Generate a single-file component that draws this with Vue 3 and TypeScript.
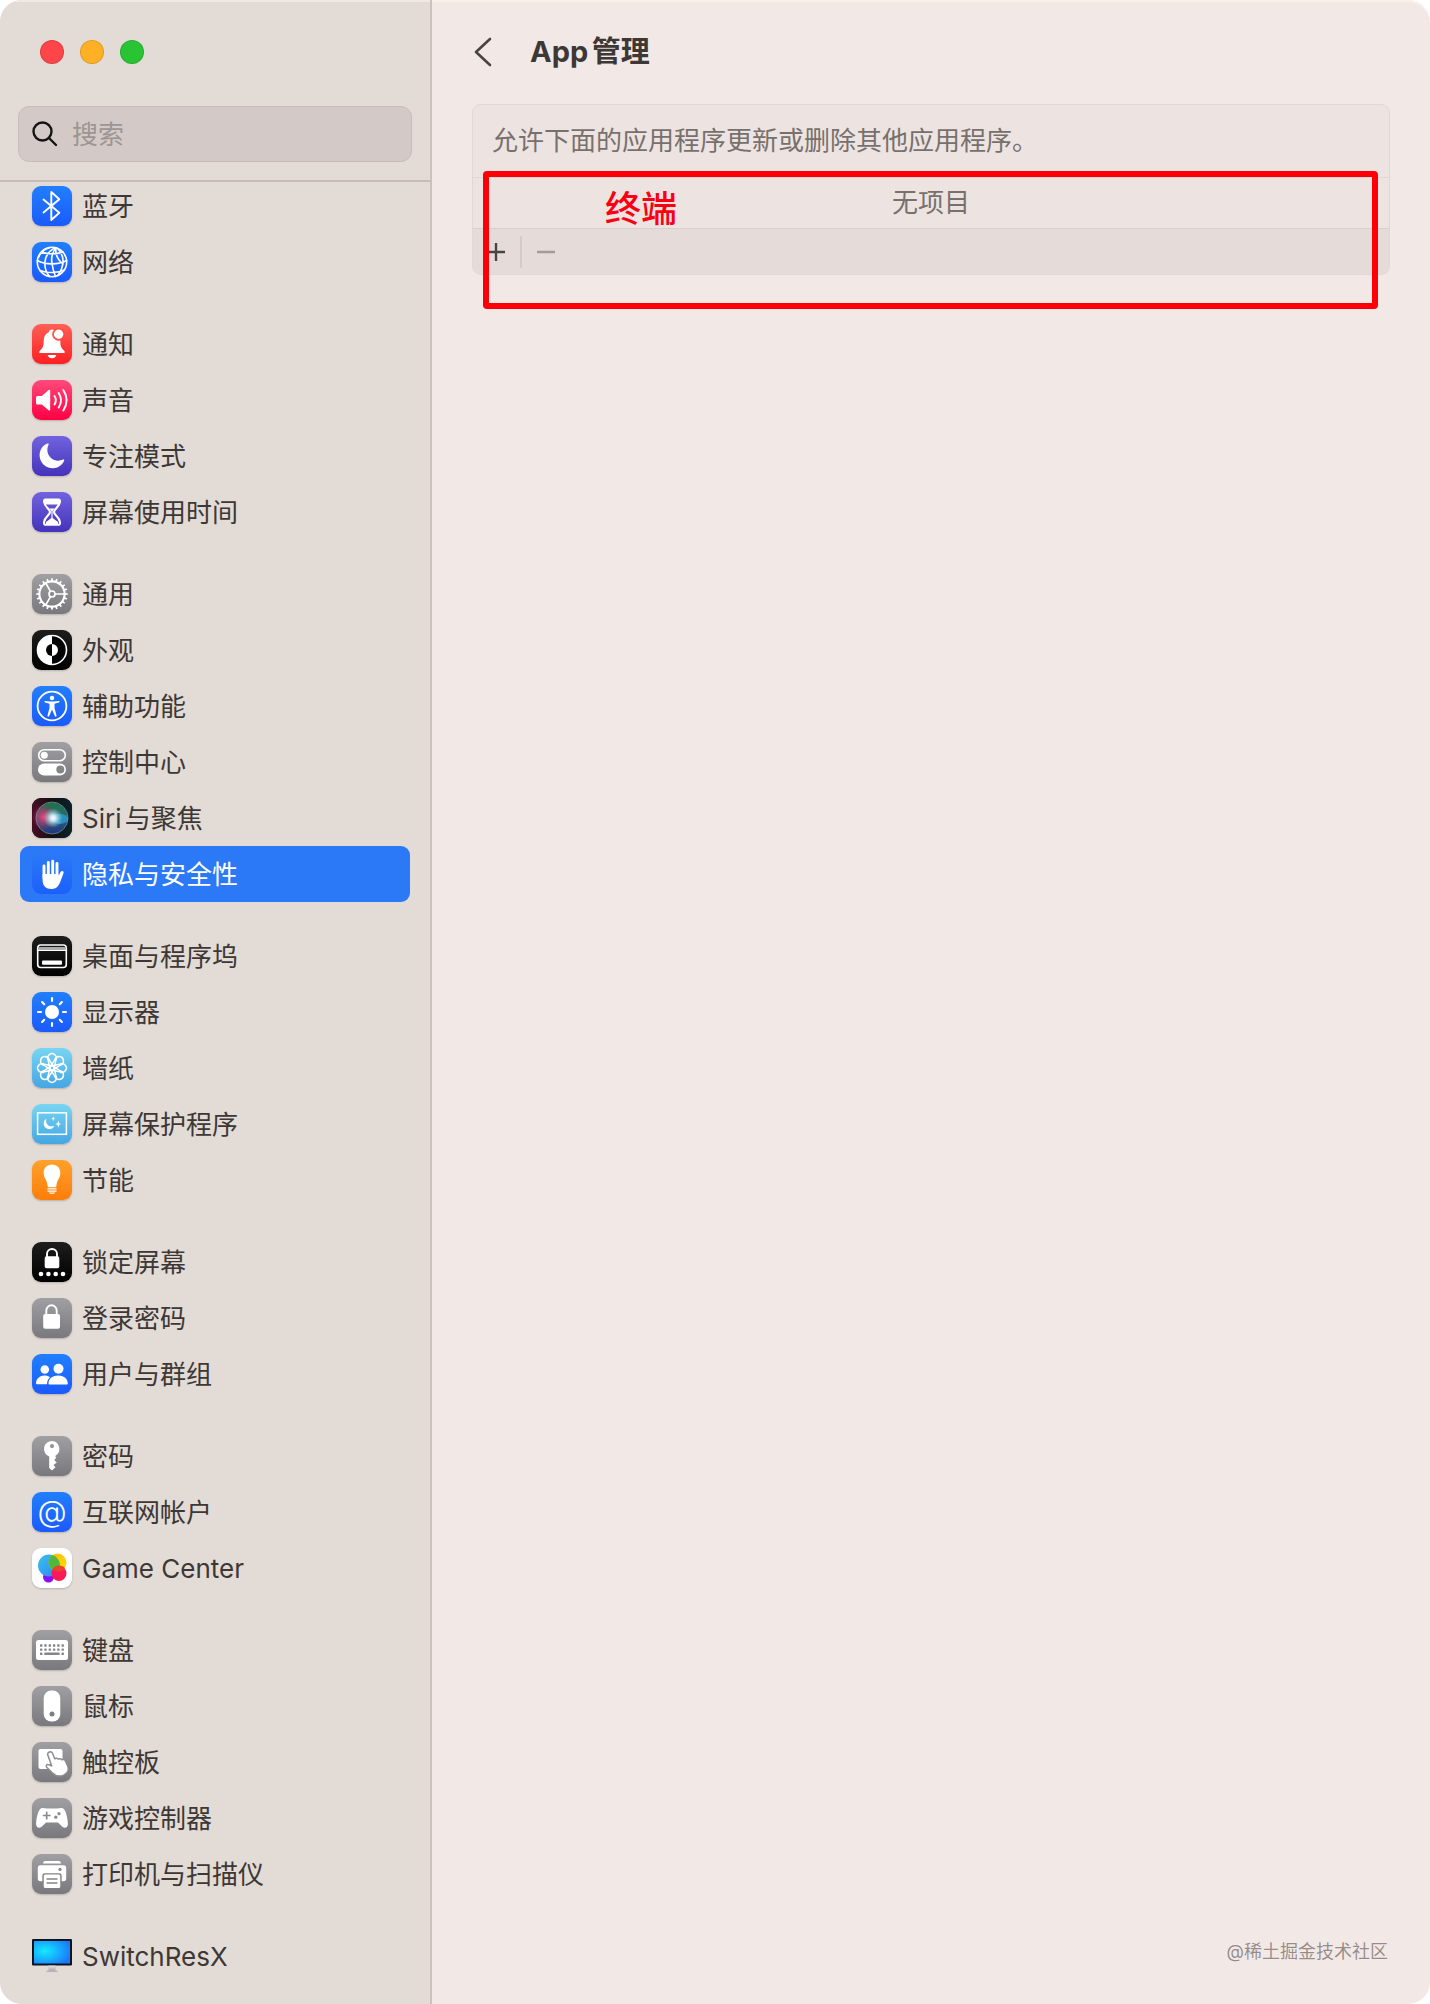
<script setup lang="ts">
import { ref } from 'vue'

interface Item {
  label: string
  icon: string
  tone: string
}

const query = ref('')
const selected = ref('隐私与安全性')

const groups: Item[][] = [
  [
    { label: '蓝牙', icon: 'bluetooth', tone: 'blue' },
    { label: '网络', icon: 'globe', tone: 'blue' },
  ],
  [
    { label: '通知', icon: 'bell', tone: 'red' },
    { label: '声音', icon: 'speaker', tone: 'pink' },
    { label: '专注模式', icon: 'moon', tone: 'indigo' },
    { label: '屏幕使用时间', icon: 'hourglass', tone: 'indigo' },
  ],
  [
    { label: '通用', icon: 'gear', tone: 'gray' },
    { label: '外观', icon: 'appearance', tone: 'black' },
    { label: '辅助功能', icon: 'person', tone: 'blue' },
    { label: '控制中心', icon: 'toggles', tone: 'gray' },
    { label: 'Siri与聚焦', icon: 'siri', tone: 'black' },
    { label: '隐私与安全性', icon: 'hand', tone: 'blue' },
  ],
  [
    { label: '桌面与程序坞', icon: 'dock', tone: 'black' },
    { label: '显示器', icon: 'sun', tone: 'blue' },
    { label: '墙纸', icon: 'flower', tone: 'cyan' },
    { label: '屏幕保护程序', icon: 'saver', tone: 'cyan' },
    { label: '节能', icon: 'bulb', tone: 'orange' },
  ],
  [
    { label: '锁定屏幕', icon: 'lockDots', tone: 'black' },
    { label: '登录密码', icon: 'lock', tone: 'gray' },
    { label: '用户与群组', icon: 'users', tone: 'blue' },
  ],
  [
    { label: '密码', icon: 'key', tone: 'gray' },
    { label: '互联网帐户', icon: 'at', tone: 'blue' },
    { label: 'Game Center', icon: 'game', tone: 'white' },
  ],
  [
    { label: '键盘', icon: 'keyboard', tone: 'gray' },
    { label: '鼠标', icon: 'mouse', tone: 'gray' },
    { label: '触控板', icon: 'trackpad', tone: 'gray' },
    { label: '游戏控制器', icon: 'gamepad', tone: 'gray' },
    { label: '打印机与扫描仪', icon: 'printer', tone: 'gray' },
  ],
  [{ label: 'SwitchResX', icon: 'monitor', tone: 'clear' }],
]

const line = (w: number, body: string) =>
  `<g fill="none" stroke="#fff" stroke-width="${w}" stroke-linecap="round" stroke-linejoin="round">${body}</g>`
const spin = (n: number, body: string) =>
  Array.from({ length: n }, (_, i) => `<g transform="rotate(${(360 / n) * i} 20 20)">${body}</g>`).join('')

const keys = [0, 1, 2]
  .map((r) =>
    [0, 1, 2, 3, 4, 5]
      .filter((c) => r < 2 || c === 0 || c === 5)
      .map((c) => `<rect x="${8 + c * 4.3}" y="${14.3 + r * 4.1}" width="2.4" height="2.4" rx=".5"/>`)
      .join(''),
  )
  .join('')

// Glyphs are drawn on a 40 x 40 tile.
const icons: Record<string, string> = {
  bluetooth: line(1.9, '<path d="M11.500 13.500 27.300 26.800 19.300 34V6l8 7.200L11.500 26.500"/>'),
  globe: line(
    1.6,
    '<circle cx="20" cy="20" r="14.700"/><path d="M23 5.600C17 9 13 15 12.800 21c0 5 1.700 10 4.700 13.400M24 5.800c-4 5-5 10-4 15.500 .6 5 2 9.500 3.500 13.200M18 5.500C12 7 8 11.500 6.500 15.500M25 6c4 4 6.500 8.500 6 14-.3 4.500-2 9-5 13.200M24 6c-1 6 1 11 7 16M9.500 10c6 2.500 15 2.500 21.500 0M5.300 18.500c8 4.500 21 4.500 29.400 0M8 28.500c7 2.700 17.500 2.700 24.500-.5"/>',
  ),
  bell: '<path fill="#fff" d="M20 5.500c-2 0-3 1-3 2.600-3.600 1.400-5.300 4.800-5.300 9 0 5.500-1 7-4 9.900-1 1-.6 2 .6 2h23.400c1.200 0 1.600-1 .6-2-3-2.900-4-4.400-4-9.900 0-4.200-1.700-7.600-5.300-9 0-1.600-1-2.600-3-2.600zM15.700 31h8.600c-.5 2-2 3.300-4.300 3.300s-3.800-1.300-4.300-3.300z"/><circle cx="26.600" cy="10.300" r="6.400" fill="#fd4b43"/><circle cx="26.600" cy="10.300" r="4.700" fill="#fff"/>',
  speaker:
    '<path fill="#fff" d="M4 17.500Q4 16 5.500 16H9.800L16.600 10q1.600-1 1.600.8v18.700q0 1.800-1.600.8L9.800 24.500H5.500Q4 24.500 4 23z"/>' +
    line(1.9, '<path d="M22.500 16q2.700 4.200 0 8.500M26.700 13q4.700 7.200 0 14.500M31.300 10q6.700 10.200 0 20.500"/>'),
  moon: '<path fill="#fff" d="M15.500 7.500C9 10 6.500 16.500 8 22.500c1.700 6 7 10 13 9.800 5-.2 9.200-3 11.200-7.800.3-.9-.4-1.300-1.200-.9-4 1.900-9 1.400-12.500-2.100-3.500-3.500-4-8.500-1.900-12.900.3-.8-.2-1.400-1.100-1.100z"/>',
  hourglass:
    line(
      2.1,
      '<path d="M13.300 7.500h13.400q1.500 0 1.200 2.500c-.5 5-5.900 7-5.900 10s5.400 5 5.900 10q.3 2.800-1.200 2.800H13.300q-1.500 0-1.200-2.800c.5-5 5.900-7 5.900-10s-5.400-5-5.900-10q-.3-2.500 1.200-2.500z"/>',
    ) +
    '<path fill="#fff" d="M12 7h16l-1 5.500H13zM17.500 16.500h5L20.600 19v7l5.400 4v2.500H14V30l5.400-4v-7z"/>',
  gear:
    line(2.1, '<circle cx="20" cy="20" r="12.600"/>') +
    line(1.7, '<circle cx="20" cy="20" r="3"/><path d="M23 20h9.500M18.500 17.400 13.800 9.200M18.500 22.600l-4.700 8.200"/>') +
    spin(20, '<path fill="#fff" d="M18.900 7.500 19.300 4.200h1.400l.4 3.300z"/>'),
  appearance:
    '<circle cx="20" cy="20" r="14.500" fill="#050505" stroke="#fff" stroke-width="1.600"/><path fill="#fff" d="M20 5.500a14.500 14.500 0 0 0 0 29zM20 14a6 6 0 0 1 0 12z"/><path fill="#050505" d="M20 14a6 6 0 0 0 0 12z"/>',
  person:
    line(1.8, '<circle cx="20" cy="20" r="14.400"/>') +
    '<circle cx="20" cy="12" r="2.200" fill="#fff"/><path fill="#fff" d="M13.600 14.900 18 15.600h4l4.400-.7c1.400-.1 1.600 1.400.3 1.700L22.500 17.800V22l2 7.500c.3 1.300-1.200 1.600-1.700.4L20 23.500l-2.800 6.400c-.5 1.200-2 .9-1.700-.4l2-7.500v-4.200l-4.200-1.200c-1.300-.3-1.100-1.800.3-1.700z"/>',
  toggles:
    '<rect x="6.700" y="7.700" width="26.600" height="11" rx="5.500" fill="none" stroke="#fff" stroke-width="1.600"/><circle cx="12.300" cy="13.200" r="3.500" fill="#fff"/><rect x="6" y="21.500" width="28" height="12" rx="6" fill="#fff"/><circle cx="28.300" cy="27.500" r="4" fill="#858487"/>',
  siri:
    '<defs><linearGradient id="s0"><stop offset="0" stop-color="#4a0c25"/><stop offset=".5" stop-color="#111"/><stop offset="1" stop-color="#08232e"/></linearGradient><radialGradient id="s1"><stop offset="0" stop-color="#fff"/><stop offset=".3" stop-color="#d8f2ff" stop-opacity=".9"/><stop offset="1" stop-color="#7cc" stop-opacity="0"/></radialGradient><linearGradient id="s2" y2="1" x2="0"><stop offset="0" stop-color="#23935a"/><stop offset=".45" stop-color="#338288"/><stop offset="1" stop-color="#2640a8"/></linearGradient><radialGradient id="s3"><stop offset="0" stop-color="#f3417e"/><stop offset="1" stop-color="#c91d5c" stop-opacity="0"/></radialGradient></defs>' +
    '<rect width="40" height="40" rx="9" fill="url(#s0)"/><circle cx="20" cy="20" r="15.500" fill="url(#s2)" opacity=".75"/><ellipse cx="11.500" cy="19" rx="12" ry="13" fill="url(#s3)"/><ellipse cx="28" cy="21" rx="8" ry="5" fill="#2ba7e8" opacity=".65"/><circle cx="21" cy="20" r="10" fill="url(#s1)"/><circle cx="20" cy="20" r="16" fill="none" stroke="#8ab" stroke-width=".9" opacity=".75"/>',
  hand:
    line(2.9, '<path d="M12 12v12M16.300 8.500V22M20.700 7.300V22M25 9.500V24"/>') +
    '<path fill="#fff" d="M10.600 20h15.900v2l2-4c1-1.800 3.800-1.200 3 1.200L28 28.500c-1.800 4.500-4.500 6.500-8.800 6.500-5.200 0-8.600-3-8.600-9z"/>',
  dock:
    line(1.6, '<rect x="5.700" y="9" width="28.600" height="22.500" rx="3"/>') +
    '<path fill="#aaa" d="M6 11h28v2.500H6z"/><path fill="#fff" d="M6 13.500h28V15H6z"/><rect x="10" y="24.500" width="20" height="4.300" rx="1" fill="#fff"/>',
  sun: '<circle cx="20" cy="20" r="7" fill="#fff"/>' + spin(8, line(2.1, '<path d="M20 6v3"/>')),
  flower: spin(8, line(1.5, '<path d="M18.200 22 16.200 12.300A4.400 4.400 0 1 1 23.800 12.300L21.800 22"/>')),
  saver:
    '<rect x="5.600" y="8.800" width="28.800" height="21.500" fill="none" stroke="#fff" stroke-width="1.500"/><path fill="#fff" d="M14.500 14.500c-3.500 2-3.600 7-.8 9.300 3.300 2.600 7.600 1.200 8.500-2-3 1.200-5.700.4-7.200-1.800-1.200-1.800-1.200-3.800-.5-5.500zM26.300 16.500l.9 2.700 2 .8-2 .8-.9 2.900-.9-2.900-2-.8 2-.8zM21.300 12.300l.6 1.800 1.400.6-1.400.6-.6 1.800-.6-1.800-1.400-.6 1.400-.6z"/>',
  bulb: '<path fill="#fff" d="M20 4.500c-5 0-8.300 3.600-8.300 8.200 0 5.500 3.500 7 3.900 13 .1 1.300.5 1.500 1.500 1.500h5.800c1 0 1.400-.2 1.500-1.500.4-6 3.900-7.500 3.900-13 0-4.600-3.300-8.200-8.300-8.200z"/><path fill="#fff" d="M15.500 28.300h9v1.300h-9zM15.500 30.500h9v1.200h-9zM16.800 32.500h6.400l-1.200 1.300h-4z"/>',
  lockDots:
    line(1.9, '<path d="M15 16v-4a5 5 0 0 1 10 0v4"/>') +
    '<rect x="12.700" y="14.300" width="14.600" height="12" rx="1.800" fill="#fff"/><g fill="#fff"><circle cx="9" cy="32" r="2.300"/><circle cx="16.400" cy="32" r="2.300"/><circle cx="23.700" cy="32" r="2.300"/><circle cx="31" cy="32" r="2.300"/></g>',
  lock:
    line(1.9, '<path d="M14.300 17v-4.500a5.200 5.200 0 0 1 10.400 0V17"/>') +
    '<rect x="11.200" y="16" width="16.800" height="14.700" rx="2" fill="#fff"/>',
  users:
    '<g fill="#fff"><circle cx="12.800" cy="15.500" r="4.300"/><circle cx="26.500" cy="14.800" r="5"/><path d="M4 29.500c0-5 4-8 8.500-8 2 0 4 .6 5.500 1.700-2 1.700-3 4-3 7H5q-1 0-1-.700zM16.500 29.500c0-5.200 4.500-8 9.700-8s9.600 2.800 9.600 8q0 1-1 1H17.500q-1 0-1-1z"/></g>',
  key: '<path fill="#fff" fill-rule="evenodd" d="M20 5a8 8 0 0 0-2.800 15.500V32l2.800 2.600 3.500-3.300-2-2.300 3.300-2.500-2.600-2.500 2-2.300-1-1.700A8 8 0 0 0 20 5zm0 3a2.100 2.100 0 1 1 0 4.200A2.100 2.100 0 0 1 20 8z"/>',
  at: '<text x="20" y="30" text-anchor="middle" font-family="Inter, sans-serif" font-size="30" font-weight="300" fill="#fff">@</text>',
  game:
    '<defs><linearGradient id="g1" y2="1"><stop offset="0" stop-color="#3ac4e8"/><stop offset="1" stop-color="#2f83f5"/></linearGradient><linearGradient id="g2" y2="1"><stop offset="0" stop-color="#fdb913"/><stop offset="1" stop-color="#ffe000"/></linearGradient><clipPath id="g3"><circle cx="17" cy="17.500" r="11"/></clipPath></defs>' +
    '<circle cx="16.500" cy="29" r="5.500" fill="#8a10f0"/><circle cx="17" cy="17.500" r="11" fill="url(#g1)"/><circle cx="25.500" cy="14.500" r="9" fill="url(#g2)"/><circle cx="25.500" cy="14.500" r="9" fill="#4fb83c" clip-path="url(#g3)"/><circle cx="27" cy="25.500" r="7.500" fill="#fb1a55"/><path fill="#e8452c" d="M21 21a7.500 7.500 0 0 1 12-1q-2.500 3.500-7 3.500-3 0-5-2.500z"/>',
  keyboard: `<rect x="4" y="10" width="32" height="20" rx="2.500" fill="#fff"/><g fill="#858487">${keys}<rect x="12.300" y="22.500" width="15.300" height="2.400" rx=".500"/></g>`,
  mouse:
    '<rect x="11.700" y="4.500" width="16.600" height="31" rx="7.500" fill="#fff"/><circle cx="20" cy="28" r="2.500" fill="#7f7e82"/>',
  trackpad:
    '<rect x="6.500" y="7" width="24" height="20" rx="2" fill="#fff"/><path fill="#fff" stroke="#8d8c8f" stroke-width="1.500" stroke-linejoin="round" d="M17.500 10c1.300-.6 2.500.1 3 1.300l2.300 5.500c1.300-1 2.800-.6 3.400.4 1.400-.9 3-.5 3.600.6 1.400-.7 3-.1 3.700 1.300l2.200 5c1.500 4-.3 7.300-4 9-4.500 2-8.500.6-11.500-2.400l-5.500-5.500c-1.300-1.500.3-3.300 2-2.600l3 1.400-4-11.200c-.5-1.200.500-2.300 1.800-2.800z"/>',
  gamepad:
    '<path fill="#fff" d="M10.500 10q9.500 1 19 0c3.500-.2 6 7.500 6.400 15.500.1 4.800-3.900 5.300-6.400 2.500L26 24.500H14L10.500 28C8 30.800 4 30.300 4.100 25.500 4.500 17.500 7 9.800 10.500 10z"/><path fill="none" stroke="#8a898c" stroke-width="1.700" stroke-linecap="round" d="M11.500 17.500h6.400M14.700 14.300v6.400"/><circle cx="27" cy="15.700" r="1.600" fill="#8a898c"/><circle cx="23.800" cy="19.200" r="1.600" fill="#8a898c"/>',
  printer:
    '<path fill="#fff" d="M13 7h14q2 0 2 2.500H11Q11 7 13 7zM8.500 11.300h23q2.700 0 2.700 2.700v10.500q0 2.700-2.700 2.700H8.500q-2.700 0-2.700-2.700V14q0-2.700 2.700-2.700z"/><circle cx="28" cy="15.400" r="1.600" fill="#8a898c"/><rect x="10.300" y="19.200" width="19.400" height="15" rx="2.500" fill="#858487"/><rect x="11.800" y="20.600" width="16.400" height="13.400" rx="1.500" fill="#fff"/><path stroke="#858487" stroke-width="1.400" stroke-linecap="round" d="M15 25h10M15 29h10"/>',
  monitor:
    '<defs><radialGradient id="m1" cx=".3" cy=".45" r=".75"><stop offset="0" stop-color="#14eaff"/><stop offset="1" stop-color="#1a78fb"/></radialGradient></defs><path fill="#b7b3b8" d="M16.500 31h7v3.500h2V36h-11v-1.500h2z"/><rect y="3" width="40" height="26.500" rx="1" fill="#0c1420"/><rect x="2" y="5" width="36" height="22.500" fill="url(#m1)"/><path fill="#d6d1d4" d="M16.500 29.500h7v3h-7z"/>',
}
</script>

<template>
  <div class="window">
    <aside class="sidebar">
      <header class="sidebar-head">
        <div class="lights">
          <button class="light close" aria-label="关闭"></button>
          <button class="light minimise" aria-label="最小化"></button>
          <button class="light zoom" aria-label="缩放"></button>
        </div>
        <label class="search">
          <svg viewBox="0 0 26 26" aria-hidden="true">
            <circle cx="10.500" cy="10.500" r="9" />
            <path d="m17 17 7 7" />
          </svg>
          <input v-model="query" type="text" placeholder="搜索" aria-label="搜索" />
        </label>
      </header>
      <nav class="nav">
        <ul v-for="(group, g) in groups" :key="g" class="group">
          <li v-for="item in group" :key="item.label">
            <a
              href="#"
              class="item"
              :class="{ selected: item.label === selected }"
              @click.prevent="selected = item.label"
            >
              <svg class="tile" :class="item.tone" viewBox="0 0 40 40" aria-hidden="true" v-html="icons[item.icon]"></svg>
              <span class="label">{{ item.label }}</span>
            </a>
          </li>
        </ul>
      </nav>
    </aside>

    <main class="content">
      <header class="title-bar">
        <button class="back" aria-label="返回">
          <svg viewBox="0 0 18 30" aria-hidden="true"><path d="M16 2 2 15l14 13" /></svg>
        </button>
        <h1>App管理</h1>
      </header>
      <div class="panel">
        <section class="card">
          <p class="description">允许下面的应用程序更新或删除其他应用程序。</p>
          <p class="empty">无项目</p>
          <div class="tools">
            <button aria-label="添加"><svg viewBox="0 0 18 18"><path d="M0 9h18M9 0v18" /></svg></button>
            <span class="rule"></span>
            <button class="off" aria-label="移除" disabled><svg viewBox="0 0 18 18"><path d="M0 9h18" /></svg></button>
          </div>
        </section>
        <div class="mark"><span>终端</span></div>
      </div>
      <footer class="credit">@稀土掘金技术社区</footer>
    </main>
  </div>
</template>

<style>
body {
  margin: 0;
  background: #fff;
}
</style>

<style scoped>
.window {
  display: flex;
  min-height: 100vh;
  box-sizing: border-box;
  overflow: hidden;
  border-radius: 22px;
  background: #f2e9e6;
  box-shadow: inset 0 2px 0 #f8f1ea;
  color: #3d3835;
  font-family: Inter, 'Noto Sans CJK SC', sans-serif;
  font-size: 26px;
  line-height: 40px;
  text-autospace: normal;
}
button {
  padding: 0;
  border: 0;
  background: none;
  color: inherit;
}
.sidebar {
  flex: none;
  width: 432px;
  box-sizing: border-box;
  border-right: 2px solid #cbc2bf;
  background: #e3dbd6;
  box-shadow: inset 0 2px 0 #f0e9e2;
}
.sidebar-head {
  height: 182px;
  box-sizing: border-box;
  padding: 40px 18px 0;
  border-bottom: 2px solid #c6bdba;
}
.lights {
  display: flex;
  gap: 16px;
  padding-left: 22px;
}
.light {
  width: 24px;
  height: 24px;
  border: 1px solid rgba(0, 0, 0, 0.12);
  border-radius: 50%;
}
.close {
  background: #fe4549;
}
.minimise {
  background: #feb124;
}
.zoom {
  background: #29c434;
}
.search {
  display: flex;
  align-items: center;
  gap: 14px;
  height: 56px;
  box-sizing: border-box;
  margin-top: 42px;
  padding: 0 13px;
  border: 1px solid #c6bebb;
  border-radius: 11px;
  background: #d3cac7;
}
.search svg {
  flex: none;
  width: 26px;
  height: 26px;
  fill: none;
  stroke: #161312;
  stroke-width: 2.4;
  stroke-linecap: round;
}
.search input {
  flex: 1;
  min-width: 0;
  padding: 2px 0 0;
  border: 0;
  outline: 0;
  background: none;
  color: #3d3835;
  font: inherit;
}
.search input::placeholder {
  color: #9d9592;
  opacity: 1;
}
.nav {
  display: flex;
  flex-direction: column;
  gap: 26px;
  margin: -4px 20px 20px;
}
.group {
  margin: 0;
  padding: 0;
  list-style: none;
}
.item {
  display: flex;
  align-items: center;
  gap: 10px;
  height: 56px;
  padding: 0 12px;
  border-radius: 9px;
  color: inherit;
  text-decoration: none;
}
.label {
  padding-top: 2px;
}
.selected {
  background: #2b79f7;
  color: #fff;
}
.tile {
  flex: none;
  width: 40px;
  height: 40px;
  overflow: visible;
  border-radius: 9px;
  box-shadow: 0 1px 2px rgba(0, 0, 0, 0.2);
}
.blue {
  background: linear-gradient(#217ffd, #1b5afc);
}
.selected .tile {
  background: linear-gradient(#2b79f7, #1c60fb);
  box-shadow: none;
}
.red {
  background: linear-gradient(#ff5f56, #fb2022);
}
.pink {
  background: linear-gradient(#ff4a7b, #ff0043);
}
.indigo {
  background: linear-gradient(#7163de, #4433bb);
}
.gray {
  background: linear-gradient(#a09fa2, #79787c);
}
.black {
  background: linear-gradient(#1d1d1d, #000);
}
.cyan {
  background: linear-gradient(#78d5f2, #45a6e3);
}
.orange {
  background: linear-gradient(#ffa22b, #fc7d0a);
}
.white {
  background: #fff;
}
.clear {
  border-radius: 0;
  box-shadow: none;
}
.content {
  flex: 1;
  min-width: 0;
  display: flex;
  flex-direction: column;
  padding: 0 40px 32px;
}
.title-bar {
  display: flex;
  align-items: center;
  gap: 38px;
  height: 104px;
}
.back {
  width: 18px;
  height: 30px;
  margin-left: 2px;
}
.back svg {
  display: block;
  fill: none;
  stroke: #4a4441;
  stroke-width: 2.6;
  stroke-linecap: round;
  stroke-linejoin: round;
}
h1 {
  margin: 0;
  font-size: 29px;
  font-weight: 700;
}
.panel {
  position: relative;
}
.card {
  overflow: hidden;
  border: 1px solid #e1d8d5;
  border-radius: 9px;
  background: #ede4e2;
  color: #77706d;
}
.card p {
  margin: 0;
}
.description {
  padding: 16px 19px;
  border-bottom: 1px solid #e1d8d5;
}
.empty {
  padding: 5px 0;
  border-bottom: 1px solid #d9d0cd;
  text-align: center;
}
.tools {
  display: flex;
  align-items: center;
  gap: 15px;
  height: 45px;
  padding-left: 14px;
  background: #e5dcda;
}
.tools svg {
  display: block;
  width: 18px;
  height: 18px;
  stroke: #4b4542;
  stroke-width: 2.4;
}
.tools .off svg {
  stroke: #a39b98;
}
.rule {
  width: 2px;
  height: 32px;
  background: #d4cbc8;
}
/* Red call-out laid over the card. */
.mark {
  position: absolute;
  inset: 67px 12px auto 11px;
  height: 138px;
  box-sizing: border-box;
  border: 6px solid #fb0007;
  border-radius: 4px;
  padding: 12px 116px;
  color: #fb0012;
  font-size: 36px;
  font-weight: 500;
  pointer-events: none;
}
.credit {
  margin-top: auto;
  padding-right: 2px;
  color: #968b89;
  font-size: 18px;
  text-align: right;
  text-shadow: 0 0 1px #fff;
}
</style>
